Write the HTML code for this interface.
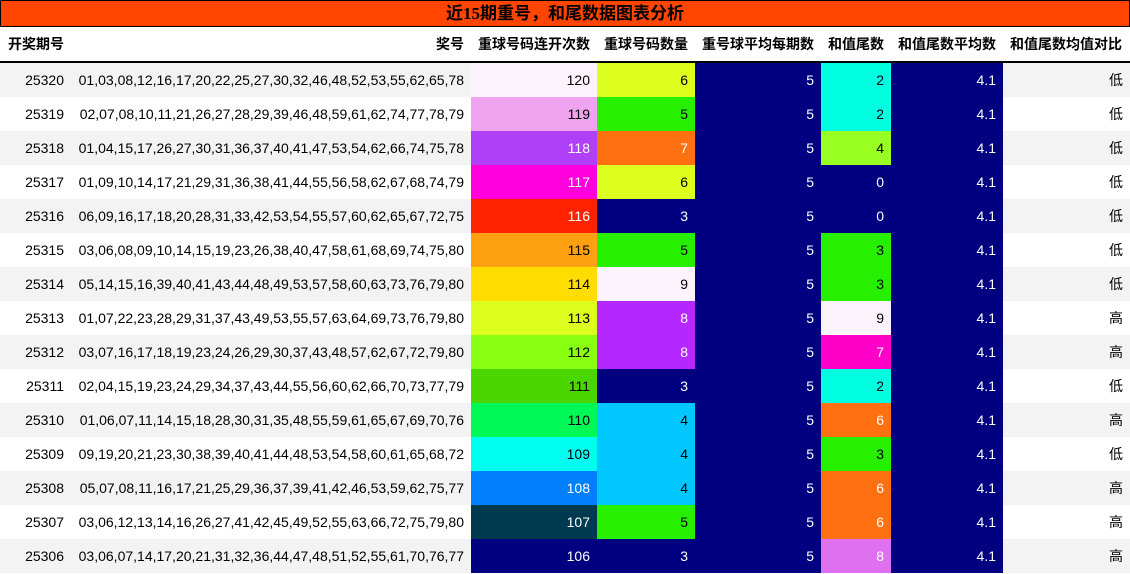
<!DOCTYPE html><html><head><meta charset="utf-8"><style>
body{margin:0;width:1130px;height:574px;overflow:hidden;background:#fff;font-family:"Liberation Sans","Noto Sans CJK SC",sans-serif;font-size:14px;color:#000}
.t{position:absolute;left:0;top:0;width:1128px;height:25px;background:#ff4500;border:1px solid #000;text-align:center;font-weight:bold;font-size:17px;line-height:26px;font-family:"Liberation Serif","Noto Sans CJK SC",sans-serif}
table{position:absolute;left:0;top:27px;border-collapse:collapse;table-layout:fixed;width:1130px}
td,th{padding:0 7px 0 0;text-align:right;white-space:nowrap;overflow:hidden}
th{height:34px;font-weight:bold;border-bottom:2px solid #000;font-size:14px}
td{height:34px}
tr.g td{background:#f3f3f3}
.w{color:#fff}
</style></head><body>
<div class="t">近15期重号，和尾数据图表分析</div>
<table>
<colgroup><col style="width:71px"><col style="width:400px"><col style="width:126px"><col style="width:98px"><col style="width:126px"><col style="width:70px"><col style="width:112px"><col style="width:127px"></colgroup>
<tr><th style="text-align:left;padding-left:8px">开奖期号</th><th>奖号</th><th>重球号码连开次数</th><th>重球号码数量</th><th>重号球平均每期数</th><th>和值尾数</th><th>和值尾数平均数</th><th style="padding-right:8px">和值尾数均值对比</th></tr>
<tr class="g"><td>25320</td><td>01,03,08,12,16,17,20,22,25,27,30,32,46,48,52,53,55,62,65,78</td><td style="background:#fdf3fd">120</td><td style="background:#dcff20">6</td><td class="w" style="background:#000080">5</td><td style="background:#00ffe0">2</td><td class="w" style="background:#000080">4.1</td><td>低</td></tr>
<tr><td>25319</td><td>02,07,08,10,11,21,26,27,28,29,39,46,48,59,61,62,74,77,78,79</td><td style="background:#f0a4f0">119</td><td style="background:#26f000">5</td><td class="w" style="background:#000080">5</td><td style="background:#00ffe0">2</td><td class="w" style="background:#000080">4.1</td><td>低</td></tr>
<tr class="g"><td>25318</td><td>01,04,15,17,26,27,30,31,36,37,40,41,47,53,54,62,66,74,75,78</td><td class="w" style="background:#b040f8">118</td><td class="w" style="background:#ff7010">7</td><td class="w" style="background:#000080">5</td><td style="background:#99ff22">4</td><td class="w" style="background:#000080">4.1</td><td>低</td></tr>
<tr><td>25317</td><td>01,09,10,14,17,21,29,31,36,38,41,44,55,56,58,62,67,68,74,79</td><td class="w" style="background:#ff00dd">117</td><td style="background:#dcff20">6</td><td class="w" style="background:#000080">5</td><td class="w" style="background:#000080">0</td><td class="w" style="background:#000080">4.1</td><td>低</td></tr>
<tr class="g"><td>25316</td><td>06,09,16,17,18,20,28,31,33,42,53,54,55,57,60,62,65,67,72,75</td><td class="w" style="background:#ff2200">116</td><td class="w" style="background:#000080">3</td><td class="w" style="background:#000080">5</td><td class="w" style="background:#000080">0</td><td class="w" style="background:#000080">4.1</td><td>低</td></tr>
<tr><td>25315</td><td>03,06,08,09,10,14,15,19,23,26,38,40,47,58,61,68,69,74,75,80</td><td style="background:#ffa010">115</td><td style="background:#26f000">5</td><td class="w" style="background:#000080">5</td><td style="background:#26f000">3</td><td class="w" style="background:#000080">4.1</td><td>低</td></tr>
<tr class="g"><td>25314</td><td>05,14,15,16,39,40,41,43,44,48,49,53,57,58,60,63,73,76,79,80</td><td style="background:#ffdd00">114</td><td style="background:#fdf3fd">9</td><td class="w" style="background:#000080">5</td><td style="background:#26f000">3</td><td class="w" style="background:#000080">4.1</td><td>低</td></tr>
<tr><td>25313</td><td>01,07,22,23,28,29,31,37,43,49,53,55,57,63,64,69,73,76,79,80</td><td style="background:#dcff20">113</td><td class="w" style="background:#b428ff">8</td><td class="w" style="background:#000080">5</td><td style="background:#fdf3fd">9</td><td class="w" style="background:#000080">4.1</td><td>高</td></tr>
<tr class="g"><td>25312</td><td>03,07,16,17,18,19,23,24,26,29,30,37,43,48,57,62,67,72,79,80</td><td style="background:#88ff10">112</td><td class="w" style="background:#b428ff">8</td><td class="w" style="background:#000080">5</td><td class="w" style="background:#ff00c8">7</td><td class="w" style="background:#000080">4.1</td><td>高</td></tr>
<tr><td>25311</td><td>02,04,15,19,23,24,29,34,37,43,44,55,56,60,62,66,70,73,77,79</td><td style="background:#4cd600">111</td><td class="w" style="background:#000080">3</td><td class="w" style="background:#000080">5</td><td style="background:#00ffe0">2</td><td class="w" style="background:#000080">4.1</td><td>低</td></tr>
<tr class="g"><td>25310</td><td>01,06,07,11,14,15,18,28,30,31,35,48,55,59,61,65,67,69,70,76</td><td style="background:#00f957">110</td><td style="background:#00c8ff">4</td><td class="w" style="background:#000080">5</td><td class="w" style="background:#ff7010">6</td><td class="w" style="background:#000080">4.1</td><td>高</td></tr>
<tr><td>25309</td><td>09,19,20,21,23,30,38,39,40,41,44,48,53,54,58,60,61,65,68,72</td><td style="background:#00fff0">109</td><td style="background:#00c8ff">4</td><td class="w" style="background:#000080">5</td><td style="background:#26f000">3</td><td class="w" style="background:#000080">4.1</td><td>低</td></tr>
<tr class="g"><td>25308</td><td>05,07,08,11,16,17,21,25,29,36,37,39,41,42,46,53,59,62,75,77</td><td class="w" style="background:#0080ff">108</td><td style="background:#00c8ff">4</td><td class="w" style="background:#000080">5</td><td class="w" style="background:#ff7010">6</td><td class="w" style="background:#000080">4.1</td><td>高</td></tr>
<tr><td>25307</td><td>03,06,12,13,14,16,26,27,41,42,45,49,52,55,63,66,72,75,79,80</td><td class="w" style="background:#003a50">107</td><td style="background:#26f000">5</td><td class="w" style="background:#000080">5</td><td class="w" style="background:#ff7010">6</td><td class="w" style="background:#000080">4.1</td><td>高</td></tr>
<tr class="g"><td>25306</td><td>03,06,07,14,17,20,21,31,32,36,44,47,48,51,52,55,61,70,76,77</td><td class="w" style="background:#000080">106</td><td class="w" style="background:#000080">3</td><td class="w" style="background:#000080">5</td><td class="w" style="background:#df70ef">8</td><td class="w" style="background:#000080">4.1</td><td>高</td></tr>
</table>
</body></html>
